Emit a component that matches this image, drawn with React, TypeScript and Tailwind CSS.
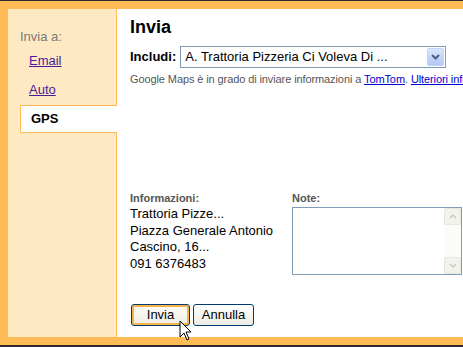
import React from "react";

export default function App() {
  return (
    <div
      className="relative w-[463px] h-[347px] overflow-hidden bg-[#2a2a2a] text-black"
      style={{ fontFamily: '"Liberation Sans", Arial, sans-serif' }}
    >
      <div className="mt-px h-[344px] bg-[#ffbb55] pt-[8px] pl-[8px] pb-[8px]">
        <div className="flex h-[328px]">
          {/* Sidebar */}
          <div className="w-[109px] shrink-0 bg-[#fee9c3] border-r border-[#ffbb55] pt-[20px]">
            <div className="pl-[12px] text-[13px] leading-[15px] text-[#7a7a7a]">Invia a:</div>
            <div className="pl-[21px] mt-[9px] text-[13px] leading-[15px]">
              <a className="text-[#4a1a9a] underline">Email</a>
            </div>
            <div className="pl-[21px] mt-[14px] text-[13px] leading-[15px]">
              <a className="text-[#4a1a9a] underline">Auto</a>
            </div>
            <div className="relative z-10 ml-[12px] mr-[-1px] mt-[8px] h-[28px] bg-white border-y border-l border-[#ffbb55] pl-[10px] flex items-center">
              <span className="text-[13px] font-bold">GPS</span>
            </div>
          </div>

          {/* Main */}
          <div className="flex-1 bg-white pl-[13px] pt-[7px] flex flex-col">
            <div className="text-[18px] leading-[22px] font-bold">Invia</div>
            <div className="mt-[8px] flex items-center h-[22px]">
              <span className="text-[13px] font-bold">Includi:</span>
              <div className="ml-[4px] w-[266px] h-[22px] border border-[#7f9db9] flex items-center">
                <span className="flex-1 pl-[4px] text-[13px] text-black whitespace-nowrap">
                  A. Trattoria Pizzeria Ci Voleva Di ...
                </span>
                <div className="w-[17px] h-[18px] mr-[1px] rounded-[2px] bg-gradient-to-b from-[#dbe6fb] to-[#b4c8f5] border border-[#c3d3fd] flex items-center justify-center">
                  <svg width="9" height="6" viewBox="0 0 9 6">
                    <path d="M1 1 L4.5 4.5 L8 1" stroke="#4d6185" strokeWidth="2" fill="none" />
                  </svg>
                </div>
              </div>
            </div>
            <div className="mt-[5px] text-[11px] leading-[13px] tracking-[-0.1px] text-[#555] whitespace-nowrap overflow-hidden">
              Google Maps è in grado di inviare informazioni a{" "}
              <a className="text-[#0000cc] underline">TomTom</a>.{" "}
              <a className="text-[#0000cc] underline">Ulteriori informazioni</a>
            </div>

            <div className="mt-[106px] flex">
              <div className="w-[162px]">
                <div className="text-[11px] leading-[13px] font-bold text-[#555]">Informazioni:</div>
                <div className="text-[13px] leading-[16.5px] mt-[1px]">
                  <div>Trattoria Pizze...</div>
                  <div>Piazza Generale Antonio</div>
                  <div>Cascino, 16...</div>
                  <div>091 6376483</div>
                </div>
              </div>
              <div className="flex-1">
                <div className="text-[11px] leading-[13px] font-bold text-[#555]">Note:</div>
                <div className="mt-[2px] w-[170px] h-[68px] border border-[#7f9db9] flex justify-end">
                  <div className="w-[17px] h-full bg-[#fbfbf7] flex flex-col justify-between">
                    <div className="h-[17px] rounded-[2px] border border-[#e6e6df] bg-[#f3f3ee] flex items-center justify-center">
                      <svg width="8" height="5" viewBox="0 0 8 5">
                        <path d="M1 4 L4 1 L7 4" stroke="#c9c9c0" strokeWidth="1.5" fill="none" />
                      </svg>
                    </div>
                    <div className="h-[17px] rounded-[2px] border border-[#e6e6df] bg-[#f3f3ee] flex items-center justify-center">
                      <svg width="8" height="5" viewBox="0 0 8 5">
                        <path d="M1 1 L4 4 L7 1" stroke="#c9c9c0" strokeWidth="1.5" fill="none" />
                      </svg>
                    </div>
                  </div>
                </div>
              </div>
            </div>

            <div className="mt-[29px] flex gap-[3px] pl-px">
              <button className="w-[59px] h-[22px] rounded-[3px] border border-[#003c74] bg-gradient-to-b from-[#fffef8] to-[#ecebe4] text-[13px] shadow-[inset_0_0_0_2px_#f8b348]">
                Invia
              </button>
              <button className="w-[61px] h-[22px] rounded-[3px] border border-[#003c74] bg-gradient-to-b from-[#ffffff] to-[#ecebe4] text-[13px]">
                Annulla
              </button>
            </div>
          </div>
        </div>
      </div>
      {/* cursor */}
      <svg className="absolute left-[179px] top-[320px]" width="14" height="22" viewBox="0 0 14 22">
        <path d="M1 1 L1 17 L5 13 L8 20 L10 19 L7 12 L12 12 Z" fill="white" stroke="black" strokeWidth="1" />
      </svg>
    </div>
  );
}
